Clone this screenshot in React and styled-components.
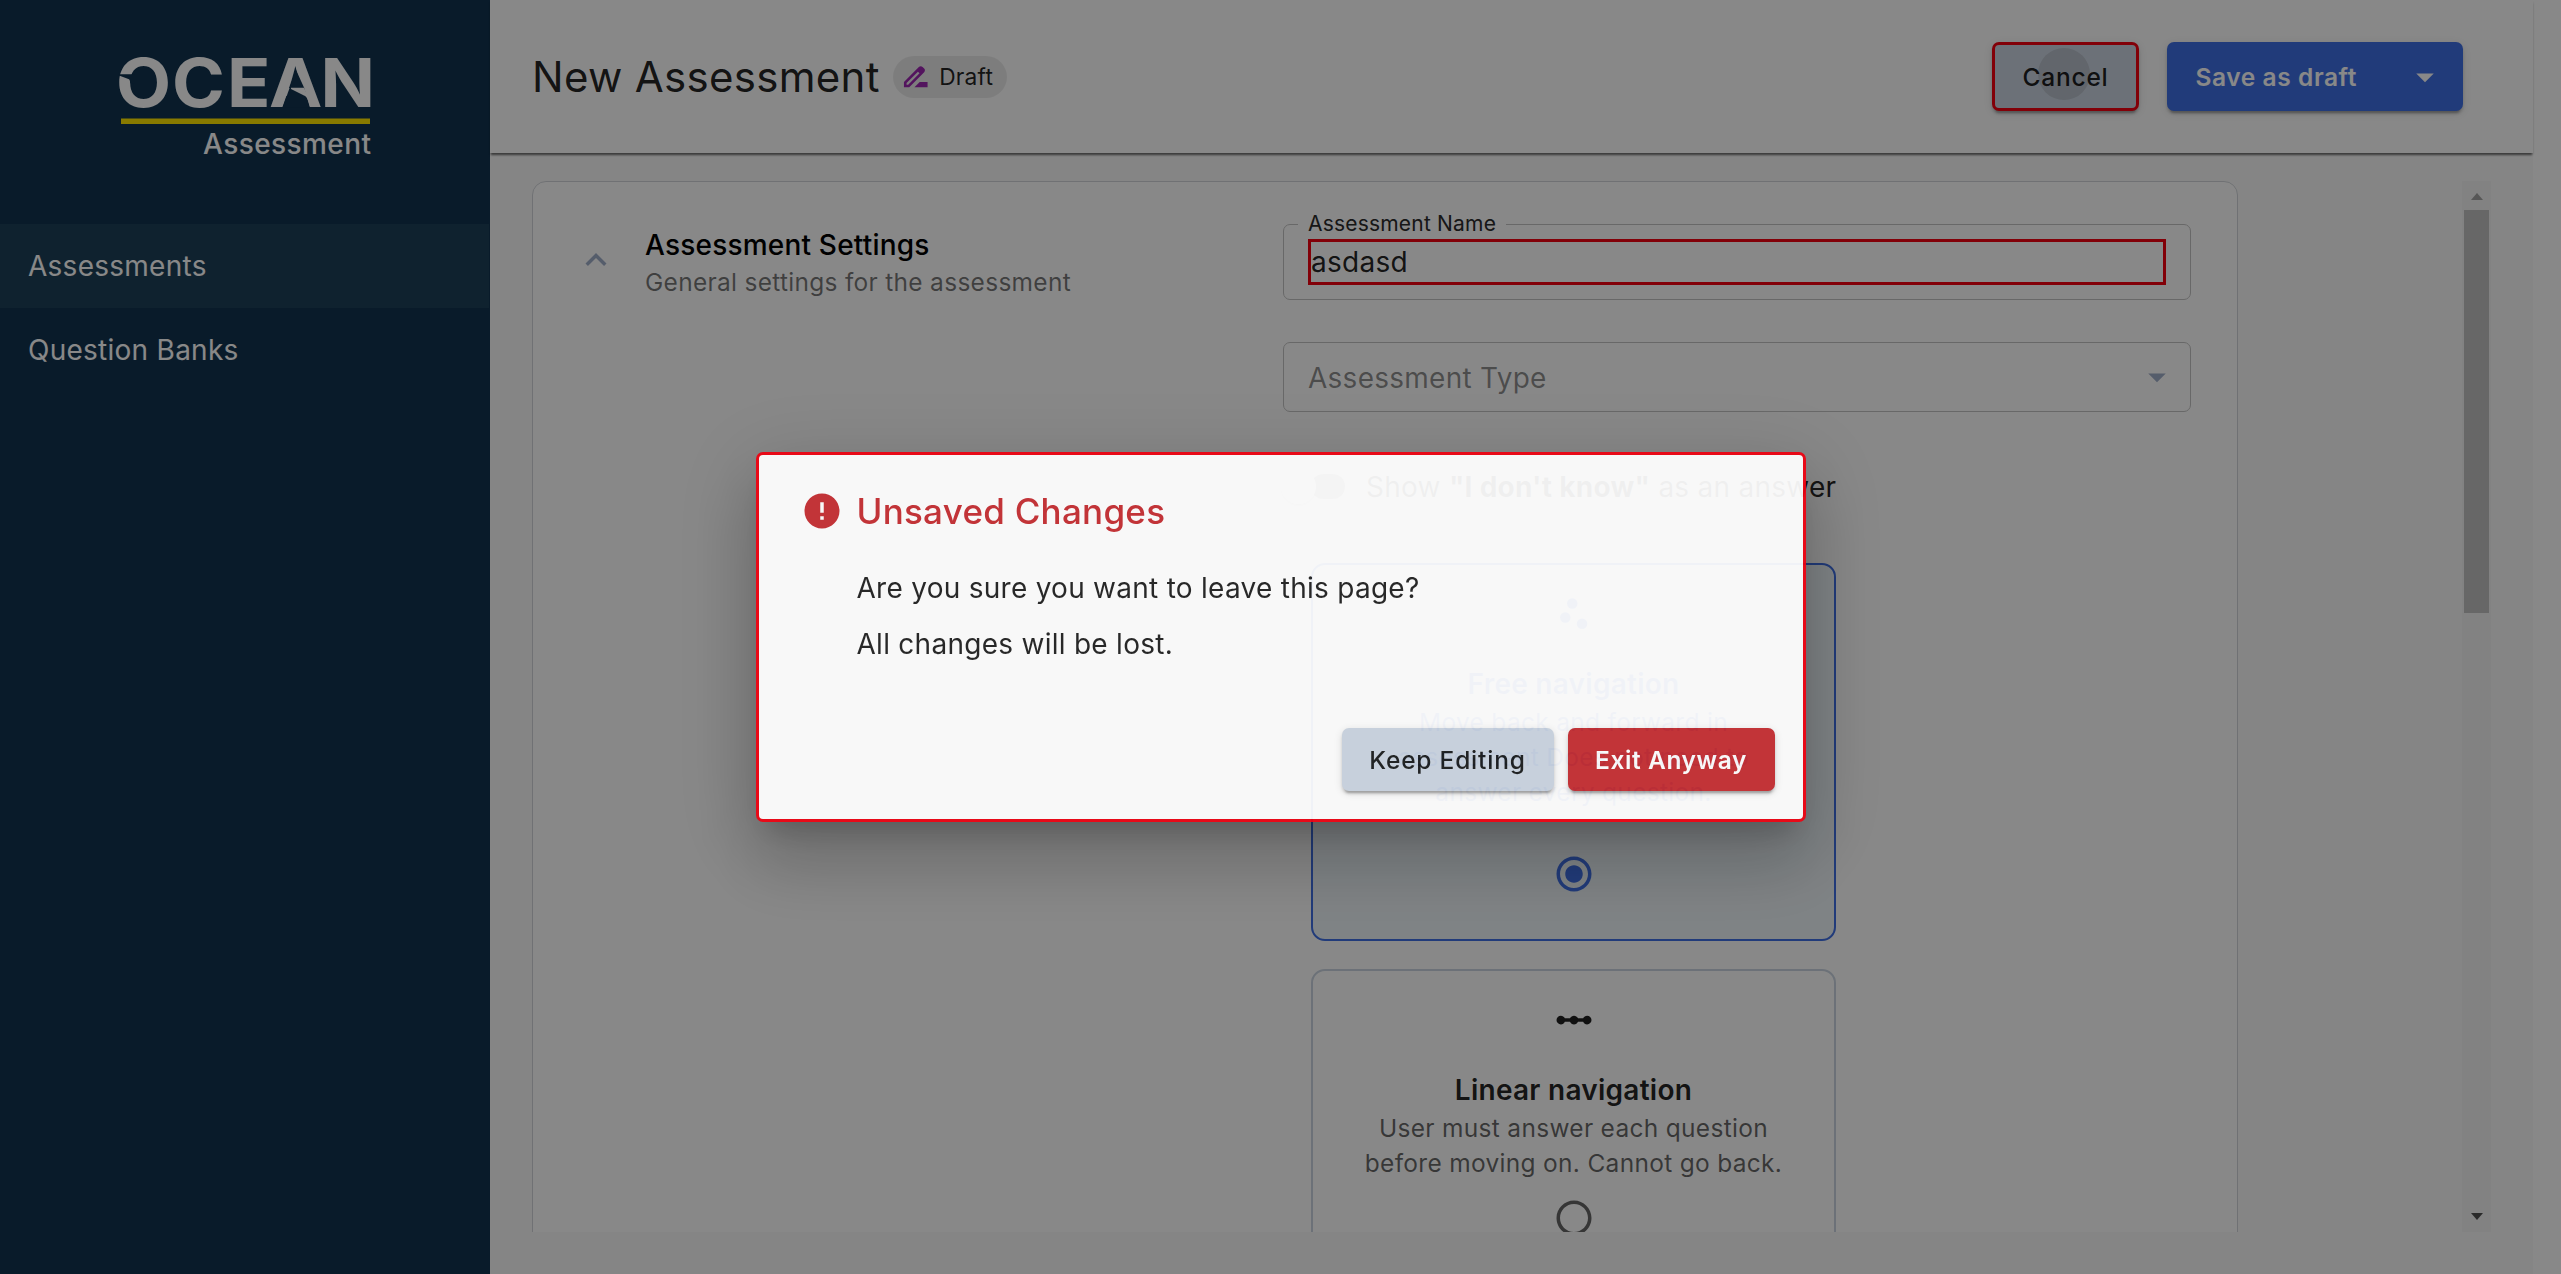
import React from "react";
import styled, { createGlobalStyle, css } from "styled-components";
import {
  MdDriveFileRenameOutline,
  MdExpandLess,
  MdArrowDropDown,
  MdScatterPlot,
  MdLinearScale,
  MdRadioButtonChecked,
  MdRadioButtonUnchecked,
  MdError,
} from "react-icons/md";

const color = {
  navy: "#11334f",
  navyActive: "#1d4058",
  blue: "#3f6fe4",
  slate: "#cbd5e1",
  icon: "#a0aec8",
  red: "#f40010",
  error: "#c62d32",
  text: "rgba(0, 0, 0, 0.87)",
  muted: "rgba(0, 0, 0, 0.6)",
  faint: "rgba(0, 0, 0, 0.45)",
};

const buttonShadow =
  "0 5px 2px -3px rgba(0,0,0,.2), 0 3px 3px 0 rgba(0,0,0,.14), 0 2px 9px 0 rgba(0,0,0,.12)";

const GlobalStyle = createGlobalStyle`
  *, *::before, *::after { box-sizing: border-box; }
  body {
    margin: 0;
    background: #fff;
    font-family: Inter, "Liberation Sans", sans-serif;
    color: ${color.text};
  }
  h1, h2, h3, p { margin: 0; font-weight: 400; }
  button { font: inherit; border: 0; cursor: pointer; }
  svg { display: block; flex: none; }
`;

const Shell = styled.div`
  display: flex;
  width: 100%;
  height: 1274px;
  overflow: hidden;
`;

const Sidebar = styled.aside`
  width: 490px;
  flex: none;
  background: ${color.navy};
  padding-right: 1px;
`;

const LogoBox = styled.div`
  height: 224px;
  padding: 45px 0 0 110px;
  svg { overflow: visible; }
`;

const NavItem = styled.a`
  display: flex;
  align-items: center;
  height: 84px;
  padding-left: 28px;
  font-size: 28px;
  letter-spacing: 0.26px;
  color: #fff;
  background: ${(p) => (p.$active ? color.navyActive : "transparent")};
`;

const Main = styled.div`
  flex: 1;
  display: flex;
  flex-direction: column;
  margin-right: 28px;
  background: #fafafa;
`;

const Header = styled.header`
  display: flex;
  align-items: center;
  height: 153px;
  flex: none;
  padding: 0 70px 0 42px;
  background: #fff;
  box-shadow: 0 3px 2px -1px rgba(0, 0, 0, 0.5), 0 2px 2px rgba(0, 0, 0, 0.12);
`;

const Title = styled.h1`
  font-size: 42px;
  line-height: 56px;
  letter-spacing: 0.3px;
`;

const Chip = styled.span`
  display: flex;
  align-items: center;
  gap: 8px;
  height: 42px;
  margin-left: 13px;
  padding: 0 14px 0 7px;
  border-radius: 28px;
  background: rgba(0, 0, 0, 0.08);
  font-size: 22.75px;
  letter-spacing: 0.2px;
  svg { color: #9c27b0; }
`;

const Actions = styled.div`
  display: flex;
  gap: 28px;
  margin-left: auto;
`;

const Button = styled.button`
  position: relative;
  display: flex;
  align-items: center;
  justify-content: center;
  width: ${(p) => p.$width}px;
  height: ${(p) => p.$height || 63}px;
  padding: 0;
  border-radius: 7px;
  box-shadow: ${buttonShadow};
  font-size: 24.5px;
  ${(p) =>
    p.$tone === "neutral"
      ? css`
          background: ${color.slate};
          color: ${color.text};
          font-weight: 450;
          letter-spacing: 0.8px;
        `
      : css`
          background: ${p.$tone === "danger" ? color.error : color.blue};
          color: #fff;
          font-weight: 600;
          letter-spacing: 0.58px;
        `}
  ${(p) => p.$outlined && css`border: 3px solid ${color.red};`}
`;

const Ripple = styled.span`
  position: absolute;
  left: 43px;
  top: 3px;
  width: 52px;
  height: 52px;
  border-radius: 50%;
  background: rgba(20, 0, 0, 0.1);
`;

const SplitLabel = styled.span`
  flex: 1;
  padding-left: 28.5px;
  text-align: left;
`;

const SplitArrow = styled.span`
  padding-right: 17px;
`;

const Body = styled.div`
  display: flex;
  justify-content: space-between;
  height: 1051px;
  margin: 28px 42px 0 42px;
  overflow: hidden;
`;

const SettingsCard = styled.section`
  display: flex;
  width: 1706px;
  height: 1300px;
  border: 1px solid #d2d5da;
  border-radius: 14px;
  background: #fff;
`;

const Summary = styled.div`
  display: flex;
  width: 750px;
  padding: 43px 0 0 42px;
  svg { margin: 14px 28px 0 0; color: ${color.icon}; }
`;

const SummaryTitle = styled.h2`
  font-size: 28px;
  line-height: 40px;
  font-weight: 500;
  letter-spacing: 0.2px;
  color: #000;
`;

const SummaryText = styled.p`
  font-size: 24.5px;
  line-height: 35px;
  letter-spacing: 0.29px;
  color: rgba(0, 0, 0, 0.54);
`;

const Form = styled.div`
  width: 908px;
  padding-top: 27px;
`;

const Fieldset = styled.fieldset`
  height: 91px;
  margin: 0;
  padding: 0 24px;
  min-width: 0;
  border: 1px solid #c4c4c4;
  border-radius: 7px;
`;

const Legend = styled.legend`
  margin-left: -10px;
  padding: 0 10px;
  font-size: 21px;
  line-height: 30px;
  letter-spacing: 0.2px;
  color: #2b2b2b;
`;

const Input = styled.input`
  display: block;
  width: 858px;
  height: 46px;
  padding: 0;
  border: 3px solid ${color.red};
  background: transparent;
  font: 28px Inter, sans-serif;
  letter-spacing: 0.26px;
  color: ${color.text};
  outline: 0;
`;

const Select = styled.div`
  display: flex;
  align-items: center;
  justify-content: space-between;
  height: 70px;
  margin-top: 42px;
  padding: 0 12px 0 24px;
  border: 1px solid #c4c4c4;
  border-radius: 7px;
  font-size: 28px;
  letter-spacing: 0.26px;
  color: ${color.faint};
  span { padding-top: 2px; }
  svg { color: ${color.icon}; }
`;

const SwitchRow = styled.div`
  display: flex;
  align-items: center;
  height: 67px;
  margin: 42px 0 0 28px;
  padding-bottom: 2px;
  font-size: 28px;
  letter-spacing: 0.26px;
  white-space: pre;
`;

const SwitchTrack = styled.span`
  display: flex;
  align-items: center;
  width: 34px;
  height: 25px;
  margin-right: 21px;
  border-radius: 12px;
  background: rgba(0, 0, 0, 0.38);
`;

const SwitchThumb = styled.span`
  flex: none;
  width: 35px;
  height: 35px;
  margin-left: -30px;
  border-radius: 50%;
  background: #fff;
  box-shadow: 0 2px 2px rgba(0, 0, 0, 0.2);
`;

const Options = styled.div`
  display: flex;
  flex-direction: column;
  gap: 28px;
  margin: 42px 0 0 28px;
`;

const OptionCard = styled.label`
  display: flex;
  flex-direction: column;
  align-items: center;
  width: 525px;
  height: 378px;
  padding-top: 28px;
  border: 2px solid ${(p) => (p.$selected ? color.blue : color.slate)};
  border-radius: 14px;
  background: ${(p) => (p.$selected ? "#eff6fa" : "#fff")};
  color: ${(p) => (p.$selected ? color.blue : color.text)};
`;

const OptionTitle = styled.h3`
  margin-top: 29px;
  font-size: 28px;
  line-height: 41px;
  font-weight: 600;
  letter-spacing: 0.26px;
`;

const OptionText = styled.p`
  font-size: 24.5px;
  line-height: 35px;
  letter-spacing: 0.3px;
  text-align: center;
  white-space: pre-line;
  color: ${(p) => (p.$selected ? color.blue : color.muted)};
`;

const RadioMark = styled.span`
  margin-top: ${(p) => (p.$selected ? 43 : 16)}px;
  color: ${(p) => (p.$selected ? color.blue : color.muted)};
`;

const Scrollbar = styled.div`
  display: flex;
  flex-direction: column;
  align-items: center;
  justify-content: space-between;
  width: 29px;
  padding: 12px 0;
  background: #f3f3f3;
`;

const ScrollThumb = styled.div`
  width: 25px;
  height: 403px;
  margin: 10px 0 auto;
  background: #c1c1c1;
`;

const ScrollArrow = styled.span`
  border: solid transparent;
  border-width: 0 6.5px;
  ${(p) =>
    p.$up
      ? css`border-bottom: 7px solid #a3a3a3;`
      : css`border-top: 7px solid #505050;`}
`;

const Backdrop = styled.div`
  position: fixed;
  inset: 0;
  display: flex;
  align-items: center;
  justify-content: center;
  background: rgba(0, 0, 0, 0.4667);
`;

const Dialog = styled.div`
  display: flex;
  flex-direction: column;
  width: 1050px;
  height: 370px;
  padding: 35px 28px 28px 42px;
  border: 3px solid #ee0010;
  border-radius: 7px;
  background: #fff;
  opacity: 0.9333;
  box-shadow: 0 19px 26px -12px rgba(0, 0, 0, 0.2),
    0 42px 67px 5px rgba(0, 0, 0, 0.14), 0 16px 81px 14px rgba(0, 0, 0, 0.12);
`;

const DialogTitle = styled.h2`
  display: flex;
  align-items: center;
  gap: 14px;
  height: 42px;
  font-size: 35px;
  font-weight: 500;
  letter-spacing: 0.26px;
  color: ${color.error};
`;

const DialogText = styled.div`
  display: flex;
  flex-direction: column;
  gap: 14px;
  padding: 35px 0 0 56px;
  font-size: 28px;
  line-height: 42px;
  letter-spacing: 0.27px;
`;

const DialogActions = styled.div`
  display: flex;
  justify-content: flex-end;
  gap: 14px;
  margin-top: auto;
`;

function Logo() {
  return (
    <svg width="270" height="120" viewBox="0 0 270 120" fontFamily="Inter, sans-serif">
      <g transform="scale(1.06 1)">
        <text y="62" x="5.6 58.4 110.4 150 198.6" fontSize="67.5" fontWeight="700" fill="#fff">
          OCEAN
        </text>
      </g>
      <path d="M8 29.3H25V38.3H20.3C20 35.8 19.6 34.8 19 34.2L9 30.4Z" fill={color.navy} />
      <path d="M186 25L172.6 62.4H200L194 42.6Z" fill={color.navy} />
      <path d="M181 42.7H194L203 62H200C198 54 197 52 194 50.5L181 44Z" fill="#fff" />
      <rect x="11" y="73.5" width="249" height="5.5" fill="#ffe500" />
      <text x="93" y="108.5" fontSize="28" fontWeight="500" textLength="168" fill="#fff">
        Assessment
      </text>
    </svg>
  );
}

function Option({ icon: Icon, title, text, selected }) {
  const Radio = selected ? MdRadioButtonChecked : MdRadioButtonUnchecked;
  return (
    <OptionCard $selected={selected}>
      <Icon size={42} />
      <OptionTitle>{title}</OptionTitle>
      <OptionText $selected={selected}>{text}</OptionText>
      <RadioMark $selected={selected}>
        <Radio size={42} />
      </RadioMark>
    </OptionCard>
  );
}

export default function App() {
  return (
    <>
      <GlobalStyle />
      <Shell>
        <Sidebar>
          <LogoBox>
            <Logo />
          </LogoBox>
          <NavItem $active>Assessments</NavItem>
          <NavItem>Question Banks</NavItem>
        </Sidebar>
        <Main>
          <Header>
            <Title>New Assessment</Title>
            <Chip>
              <MdDriveFileRenameOutline size={31.5} />
              Draft
            </Chip>
            <Actions>
              <Button $tone="neutral" $outlined $width={147} $height={69}>
                <Ripple />
                Cancel
              </Button>
              <Button $tone="primary" $width={296} $height={69}>
                <SplitLabel>Save as draft</SplitLabel>
                <SplitArrow>
                  <MdArrowDropDown size={42} />
                </SplitArrow>
              </Button>
            </Actions>
          </Header>
          <Body>
            <SettingsCard>
              <Summary>
                <MdExpandLess size={42} />
                <div>
                  <SummaryTitle>Assessment Settings</SummaryTitle>
                  <SummaryText>General settings for the assessment</SummaryText>
                </div>
              </Summary>
              <Form>
                <Fieldset>
                  <Legend>Assessment Name</Legend>
                  <Input defaultValue="asdasd" />
                </Fieldset>
                <Select>
                  <span>Assessment Type</span>
                  <MdArrowDropDown size={42} />
                </Select>
                <SwitchRow>
                  <SwitchTrack>
                    <SwitchThumb />
                  </SwitchTrack>
                  Show <b>"I don't know"</b> as an answer
                </SwitchRow>
                <Options>
                  <Option
                    selected
                    icon={MdScatterPlot}
                    title="Free navigation"
                    text={"Move back and forward in\nassessment Does not need to\nanswer every question."}
                  />
                  <Option
                    icon={MdLinearScale}
                    title="Linear navigation"
                    text={"User must answer each question\nbefore moving on. Cannot go back."}
                  />
                </Options>
              </Form>
            </SettingsCard>
            <Scrollbar>
              <ScrollArrow $up />
              <ScrollThumb />
              <ScrollArrow />
            </Scrollbar>
          </Body>
        </Main>
      </Shell>
      <Backdrop>
        <Dialog role="dialog">
          <DialogTitle>
            <MdError size={42} />
            Unsaved Changes
          </DialogTitle>
          <DialogText>
            <p>Are you sure you want to leave this page?</p>
            <p>All changes will be lost.</p>
          </DialogText>
          <DialogActions>
            <Button $tone="neutral" $width={212}>Keep Editing</Button>
            <Button $tone="danger" $width={207}>Exit Anyway</Button>
          </DialogActions>
        </Dialog>
      </Backdrop>
    </>
  );
}
